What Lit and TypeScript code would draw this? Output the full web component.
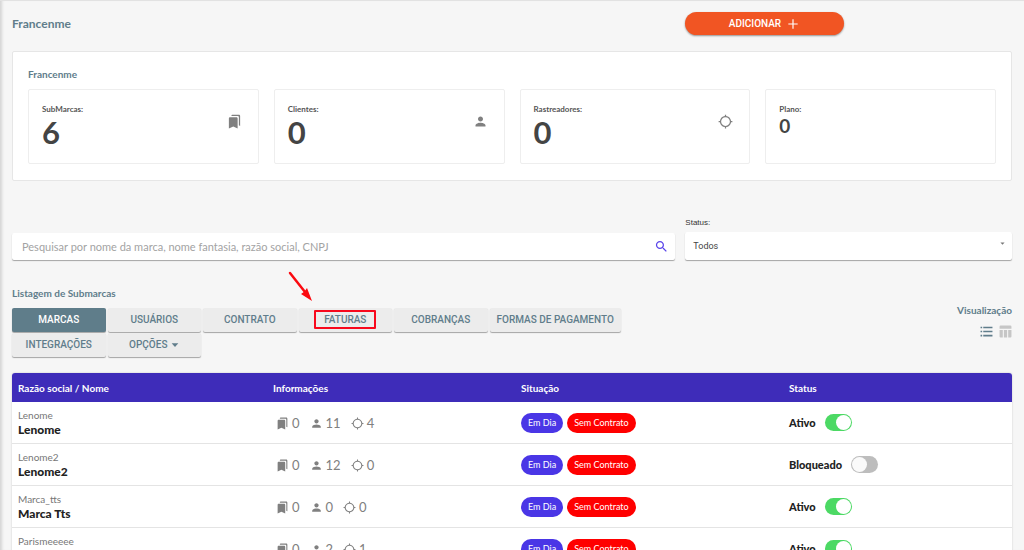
import { LitElement, html, svg, css } from "lit";
import { customElement, state } from "lit/decorators.js";
import { classMap } from "lit/directives/class-map.js";

const ICONS = {
  bookmarks:
    "M19 18l2 1V3c0-1.1-.9-2-2-2H8.99C7.89 1 7 1.9 7 3h10c1.1 0 2 .9 2 2v13zM15 5H5c-1.1 0-2 .9-2 2v16l7-3 7 3V7c0-1.1-.9-2-2-2z",
  person:
    "M12 12c2.21 0 4-1.79 4-4s-1.79-4-4-4-4 1.79-4 4 1.79 4 4 4zm0 2c-2.67 0-8 1.34-8 4v2h16v-2c0-2.66-5.33-4-8-4z",
  target:
    "M20.94 11c-.46-4.17-3.77-7.48-7.94-7.94V1h-2v2.06C6.83 3.52 3.52 6.83 3.06 11H1v2h2.06c.46 4.17 3.77 7.48 7.94 7.94V23h2v-2.06c4.17-.46 7.48-3.77 7.94-7.94H23v-2h-2.06zM12 19c-3.87 0-7-3.13-7-7s3.13-7 7-7 7 3.13 7 7-3.13 7-7 7z",
  add: "M20 13h-7v7h-2v-7H4v-2h7V4h2v7h7v2z",
  search:
    "M15.5 14h-.79l-.28-.27C15.41 12.59 16 11.11 16 9.5 16 5.91 13.09 3 9.5 3S3 5.91 3 9.5 5.91 16 9.5 16c1.61 0 3.09-.59 4.23-1.57l.27.28v.79l5 4.99L20.49 19l-4.99-5zm-6 0C7.01 14 5 11.99 5 9.5S7.01 5 9.5 5 14 7.01 14 9.5 11.99 14 9.5 14z",
  list: "M1 3h3v3H1zM1 10.500h3v3H1zM1 18h3v3H1zM6 3h17v3H6zM6 10.500h17v3H6zM6 18h17v3H6z",
  columns:
    "M3 1h18a2 2 0 0 1 2 2v4H1V3a2 2 0 0 1 2-2zM1 9h6v14H3a2 2 0 0 1-2-2zM9 9h6v14H9zM17 9h6v12a2 2 0 0 1-2 2h-4z",
  caret: "M2 7h20L12 18z",
} as const;

type IconName = keyof typeof ICONS;

const icon = (name: IconName, cls: string) => html`
  <svg class=${cls} viewBox="0 0 24 24" aria-hidden="true">${svg`<path fill="currentColor" d=${ICONS[name]}></path>`}</svg>
`;

interface Brand {
  legal: string;
  name: string;
  brands: number;
  users: number;
  trackers: number;
  active: boolean;
}

@customElement("app-root")
export class AppRoot extends LitElement {
  static styles = css`
    :host {
      display: block;
      height: 100vh;
      overflow: hidden;
      box-sizing: border-box;
      background: #f6f6f6;
      border-top: 1px solid #e2e2e2;
      box-shadow: inset 4px 0 3px -2px #d4d4d4;
      font-family: Lato, sans-serif;
      font-size: 10px;
      line-height: 16px;
      color: #444;
    }
    * { box-sizing: border-box; }
    button, input, select { font: inherit; margin: 0; }
    h1, h2, h3, p { margin: 0; }
    svg { display: block; flex: none; }
    .page { padding: 11px 12px 0; }
    .split {
      display: grid;
      grid-template-columns: 2fr 1fr;
      margin: 0 -5px;
    }
    .split > * { padding: 0 5px; min-width: 0; }
    .title { font-size: 12px; line-height: 24px; font-weight: 700; color: #607d8b; }
    .subtitle { font-size: 10px; font-weight: 700; color: #607d8b; }
    .add {
      width: calc(50% - 5px);
      height: 23px;
      display: flex;
      align-items: center;
      justify-content: center;
      gap: 5px;
      border: 0;
      border-radius: 12px;
      background: #f15523;
      color: #fff;
      font-family: Roboto, sans-serif;
      font-weight: 500;
      box-shadow: 0 1px 2px #0006;
    }
    .i15 { width: 15px; height: 15px; }
    .i14 { width: 14px; height: 14px; }
    .i13 { width: 13px; height: 13px; }
    .i8 { width: 8px; height: 8px; }

    .panel {
      margin-top: 15px;
      padding: 14px 15px 16px;
      background: #fff;
      border: 1px solid #e6e6e6;
      border-radius: 2px;
    }
    .stats {
      margin-top: 7px;
      display: grid;
      grid-template-columns: repeat(4, 1fr);
      gap: 15px;
    }
    .stat {
      min-height: 75px;
      padding: 12px 16px 12px 13px;
      border: 1px solid #eee;
      border-radius: 2px;
      display: flex;
      justify-content: space-between;
      color: #808080;
    }
    .stat svg { margin-top: 12px; }
    .label { font-size: 8px; line-height: 14px; font-weight: 700; color: #555; }
    .big { font-size: 31px; line-height: 32px; font-weight: 700; color: #444; }
    .mid { font-size: 19px; line-height: 20px; font-weight: 700; color: #444; }

    .filters { margin-top: 36px; align-items: end; }
    .search {
      display: flex;
      align-items: center;
      height: 27px;
      padding: 0 6px 0 10px;
      background: #fff;
      border-radius: 2px;
      box-shadow: 0 1px 1px #0005;
      color: #5a45ea;
    }
    .search input {
      flex: 1;
      min-width: 0;
      height: 24px;
      padding: 0;
      border: 0;
      outline: 0;
      background: none;
      font-size: 11px;
      color: #444;
    }
    .search input::placeholder { color: #a3a3a3; opacity: 1; }
    .search button, .view button {
      padding: 0;
      border: 0;
      background: none;
      color: inherit;
    }
    .status-label {
      display: block;
      margin-bottom: 3px;
      font: 8px/12px "Liberation Sans", sans-serif;
      color: #333;
    }
    .select {
      display: grid;
      align-items: center;
      background: #fff;
      border-radius: 2px;
      box-shadow: 0 1px 1px #0005;
    }
    .select > * { grid-area: 1 / 1; }
    .select select {
      appearance: none;
      width: 100%;
      height: 28px;
      padding: 0 8px;
      border: 0;
      border-radius: 2px;
      background: none;
      font: 9px/12px Roboto, sans-serif;
      color: #444;
    }
    .select svg {
      width: 5px;
      height: 5px;
      justify-self: end;
      margin: 0 7px 5px 0;
      color: #777;
      pointer-events: none;
    }

    .listing { margin-top: 25px; }
    .tabs {
      margin-top: 7px;
      display: flex;
      flex-wrap: wrap;
      gap: 1px 2px;
    }
    .tab {
      min-width: 14.1%;
      height: 24px;
      padding: 0 7px;
      display: flex;
      align-items: center;
      justify-content: center;
      gap: 4px;
      border: 0;
      border-radius: 2px;
      background: #ececec;
      color: #607d8b;
      font-family: Roboto, sans-serif;
      font-weight: 500;
      box-shadow: 0 1px 1px #0005;
    }
    .tab.on { background: #5f7d8a; color: #fff; }
    .marked { position: relative; }
    .ring {
      position: absolute;
      inset: 2px 16px 3px 15px;
      border: 2px solid #f8081c;
      border-radius: 1px;
      pointer-events: none;
    }
    .arrow {
      position: absolute;
      left: -12px;
      top: -37px;
      width: 26px;
      height: 30px;
      pointer-events: none;
    }
    .view {
      padding-top: 17px;
      display: flex;
      flex-direction: column;
      align-items: flex-end;
      gap: 7px;
      color: #607d8b;
    }
    .view div { display: flex; gap: 6px; }
    .view button.off { color: #c6c6c6; }

    .table {
      margin-top: 16px;
      width: 100%;
      table-layout: fixed;
      border-collapse: separate;
      border-spacing: 0;
      background: #fff;
      border-radius: 3px 3px 0 0;
      overflow: hidden;
      box-shadow: 0 0 2px #0003;
    }
    .c1 { width: 25.5%; }
    .c2 { width: 24.8%; }
    .c3 { width: 26.8%; }
    th {
      height: 29px;
      padding: 0 6px;
      text-align: left;
      background: #3e2cb9;
      color: #fff;
      font-weight: 700;
    }
    td { height: 42px; padding: 0 6px; border-bottom: 1px solid #e4e4e4; vertical-align: middle; }
    .legal { line-height: 14px; color: #777; }
    .name { font-size: 12px; line-height: 16px; font-weight: 900; color: #222; }
    .info { display: flex; align-items: center; gap: 10px; padding-left: 3px; color: #808080; }
    .info span { display: flex; align-items: center; gap: 3px; font-size: 13px; }
    .info svg { margin-top: 2px; }
    .badges { display: flex; gap: 4px; }
    .badge {
      height: 20px;
      padding: 0 7px;
      border-radius: 10px;
      font-size: 9px;
      line-height: 20px;
      color: #fff;
      background: #4a36e6;
    }
    .badge.bad { background: #f00; }
    .switch {
      display: inline-flex;
      align-items: center;
      gap: 9px;
      font-size: 11px;
      font-weight: 900;
      color: #222;
    }
    .switch input {
      appearance: none;
      width: 27px;
      height: 17px;
      padding: 1px;
      border-radius: 9px;
      background: #bdbdbd;
      display: flex;
    }
    .switch input::before {
      content: "";
      width: 15px;
      height: 15px;
      border-radius: 50%;
      background: #fafafa;
    }
    .switch input:checked { background: #4cd964; justify-content: flex-end; }
    .switch input:checked::before { background: #fff; }
  `;

  @state() private tab = "MARCAS";

  @state() private rows: Brand[] = [
    { legal: "Lenome", name: "Lenome", brands: 0, users: 11, trackers: 4, active: true },
    { legal: "Lenome2", name: "Lenome2", brands: 0, users: 12, trackers: 0, active: false },
    { legal: "Marca_tts", name: "Marca Tts", brands: 0, users: 0, trackers: 0, active: true },
    { legal: "Parismeeeee", name: "Parismeeeee", brands: 0, users: 2, trackers: 1, active: true },
  ];

  private toggle(i: number) {
    this.rows = this.rows.map((r, n) => (n === i ? { ...r, active: !r.active } : r));
  }

  private renderStat(label: string, value: string, name: IconName) {
    return html`<div class="stat">
      <div><p class="label">${label}</p><p class="big">${value}</p></div>
      ${icon(name, "i15")}
    </div>`;
  }

  private renderTab(label: string) {
    return html`<button
      class=${classMap({ tab: true, on: this.tab === label, marked: label === "FATURAS" })}
      @click=${() => (this.tab = label)}
    >
      ${label}
      ${label === "OPÇÕES" ? icon("caret", "i8") : ""}
      ${label === "FATURAS"
        ? html`<span class="ring"></span>
            <svg class="arrow" viewBox="0 0 26 30" aria-hidden="true">
              <path d="M3 2L18 21" stroke="#fb0a10" stroke-width="2.5" stroke-linecap="round" />
              <path d="M25 30L14 23L17.500 20.500L20 17Z" fill="#fb0a10" />
            </svg>`
        : ""}
    </button>`;
  }

  private renderRow(r: Brand, i: number) {
    const id = `status-${i}`;
    return html`<tr>
      <td><p class="legal">${r.legal}</p><p class="name">${r.name}</p></td>
      <td>
        <div class="info">
          <span>${icon("bookmarks", "i13")}${r.brands}</span>
          <span>${icon("person", "i13")}${r.users}</span>
          <span>${icon("target", "i13")}${r.trackers}</span>
        </div>
      </td>
      <td>
        <div class="badges"><span class="badge">Em Dia</span><span class="badge bad">Sem Contrato</span></div>
      </td>
      <td>
        <label class="switch" for=${id}>
          ${r.active ? "Ativo" : "Bloqueado"}
          <input id=${id} type="checkbox" .checked=${r.active} @change=${() => this.toggle(i)} />
        </label>
      </td>
    </tr>`;
  }

  render() {
    return html`<main class="page">
      <header class="split">
        <h1 class="title">Francenme</h1>
        <div><button class="add">ADICIONAR ${icon("add", "i14")}</button></div>
      </header>

      <section class="panel">
        <h2 class="subtitle">Francenme</h2>
        <div class="stats">
          ${this.renderStat("SubMarcas:", "6", "bookmarks")}
          ${this.renderStat("Clientes:", "0", "person")}
          ${this.renderStat("Rastreadores:", "0", "target")}
          <div class="stat">
            <div><p class="label">Plano:</p><p class="mid">0</p></div>
          </div>
        </div>
      </section>

      <section class="split filters">
        <div>
          <div class="search">
            <input
              type="text"
              aria-label="Pesquisar"
              placeholder="Pesquisar por nome da marca, nome fantasia, razão social, CNPJ"
            />
            <button aria-label="Buscar">${icon("search", "i15")}</button>
          </div>
        </div>
        <div>
          <label class="status-label" for="status">Status:</label>
          <div class="select">
            <select id="status"><option>Todos</option></select>
            ${icon("caret", "")}
          </div>
        </div>
      </section>

      <section class="split listing">
        <div>
          <h2 class="subtitle">Listagem de Submarcas</h2>
          <nav class="tabs">
            ${["MARCAS", "USUÁRIOS", "CONTRATO", "FATURAS", "COBRANÇAS", "FORMAS DE PAGAMENTO", "INTEGRAÇÕES", "OPÇÕES"].map(
              (t) => this.renderTab(t),
            )}
          </nav>
        </div>
        <div class="view">
          <h3 class="subtitle">Visualização</h3>
          <div>
            <button aria-label="Lista">${icon("list", "i13")}</button>
            <button class="off" aria-label="Tabela">${icon("columns", "i13")}</button>
          </div>
        </div>
      </section>

      <table class="table">
        <thead>
          <tr>
            <th class="c1">Razão social / Nome</th>
            <th class="c2">Informações</th>
            <th class="c3">Situação</th>
            <th>Status</th>
          </tr>
        </thead>
        <tbody>
          ${this.rows.map((r, i) => this.renderRow(r, i))}
        </tbody>
      </table>
    </main>`;
  }
}
